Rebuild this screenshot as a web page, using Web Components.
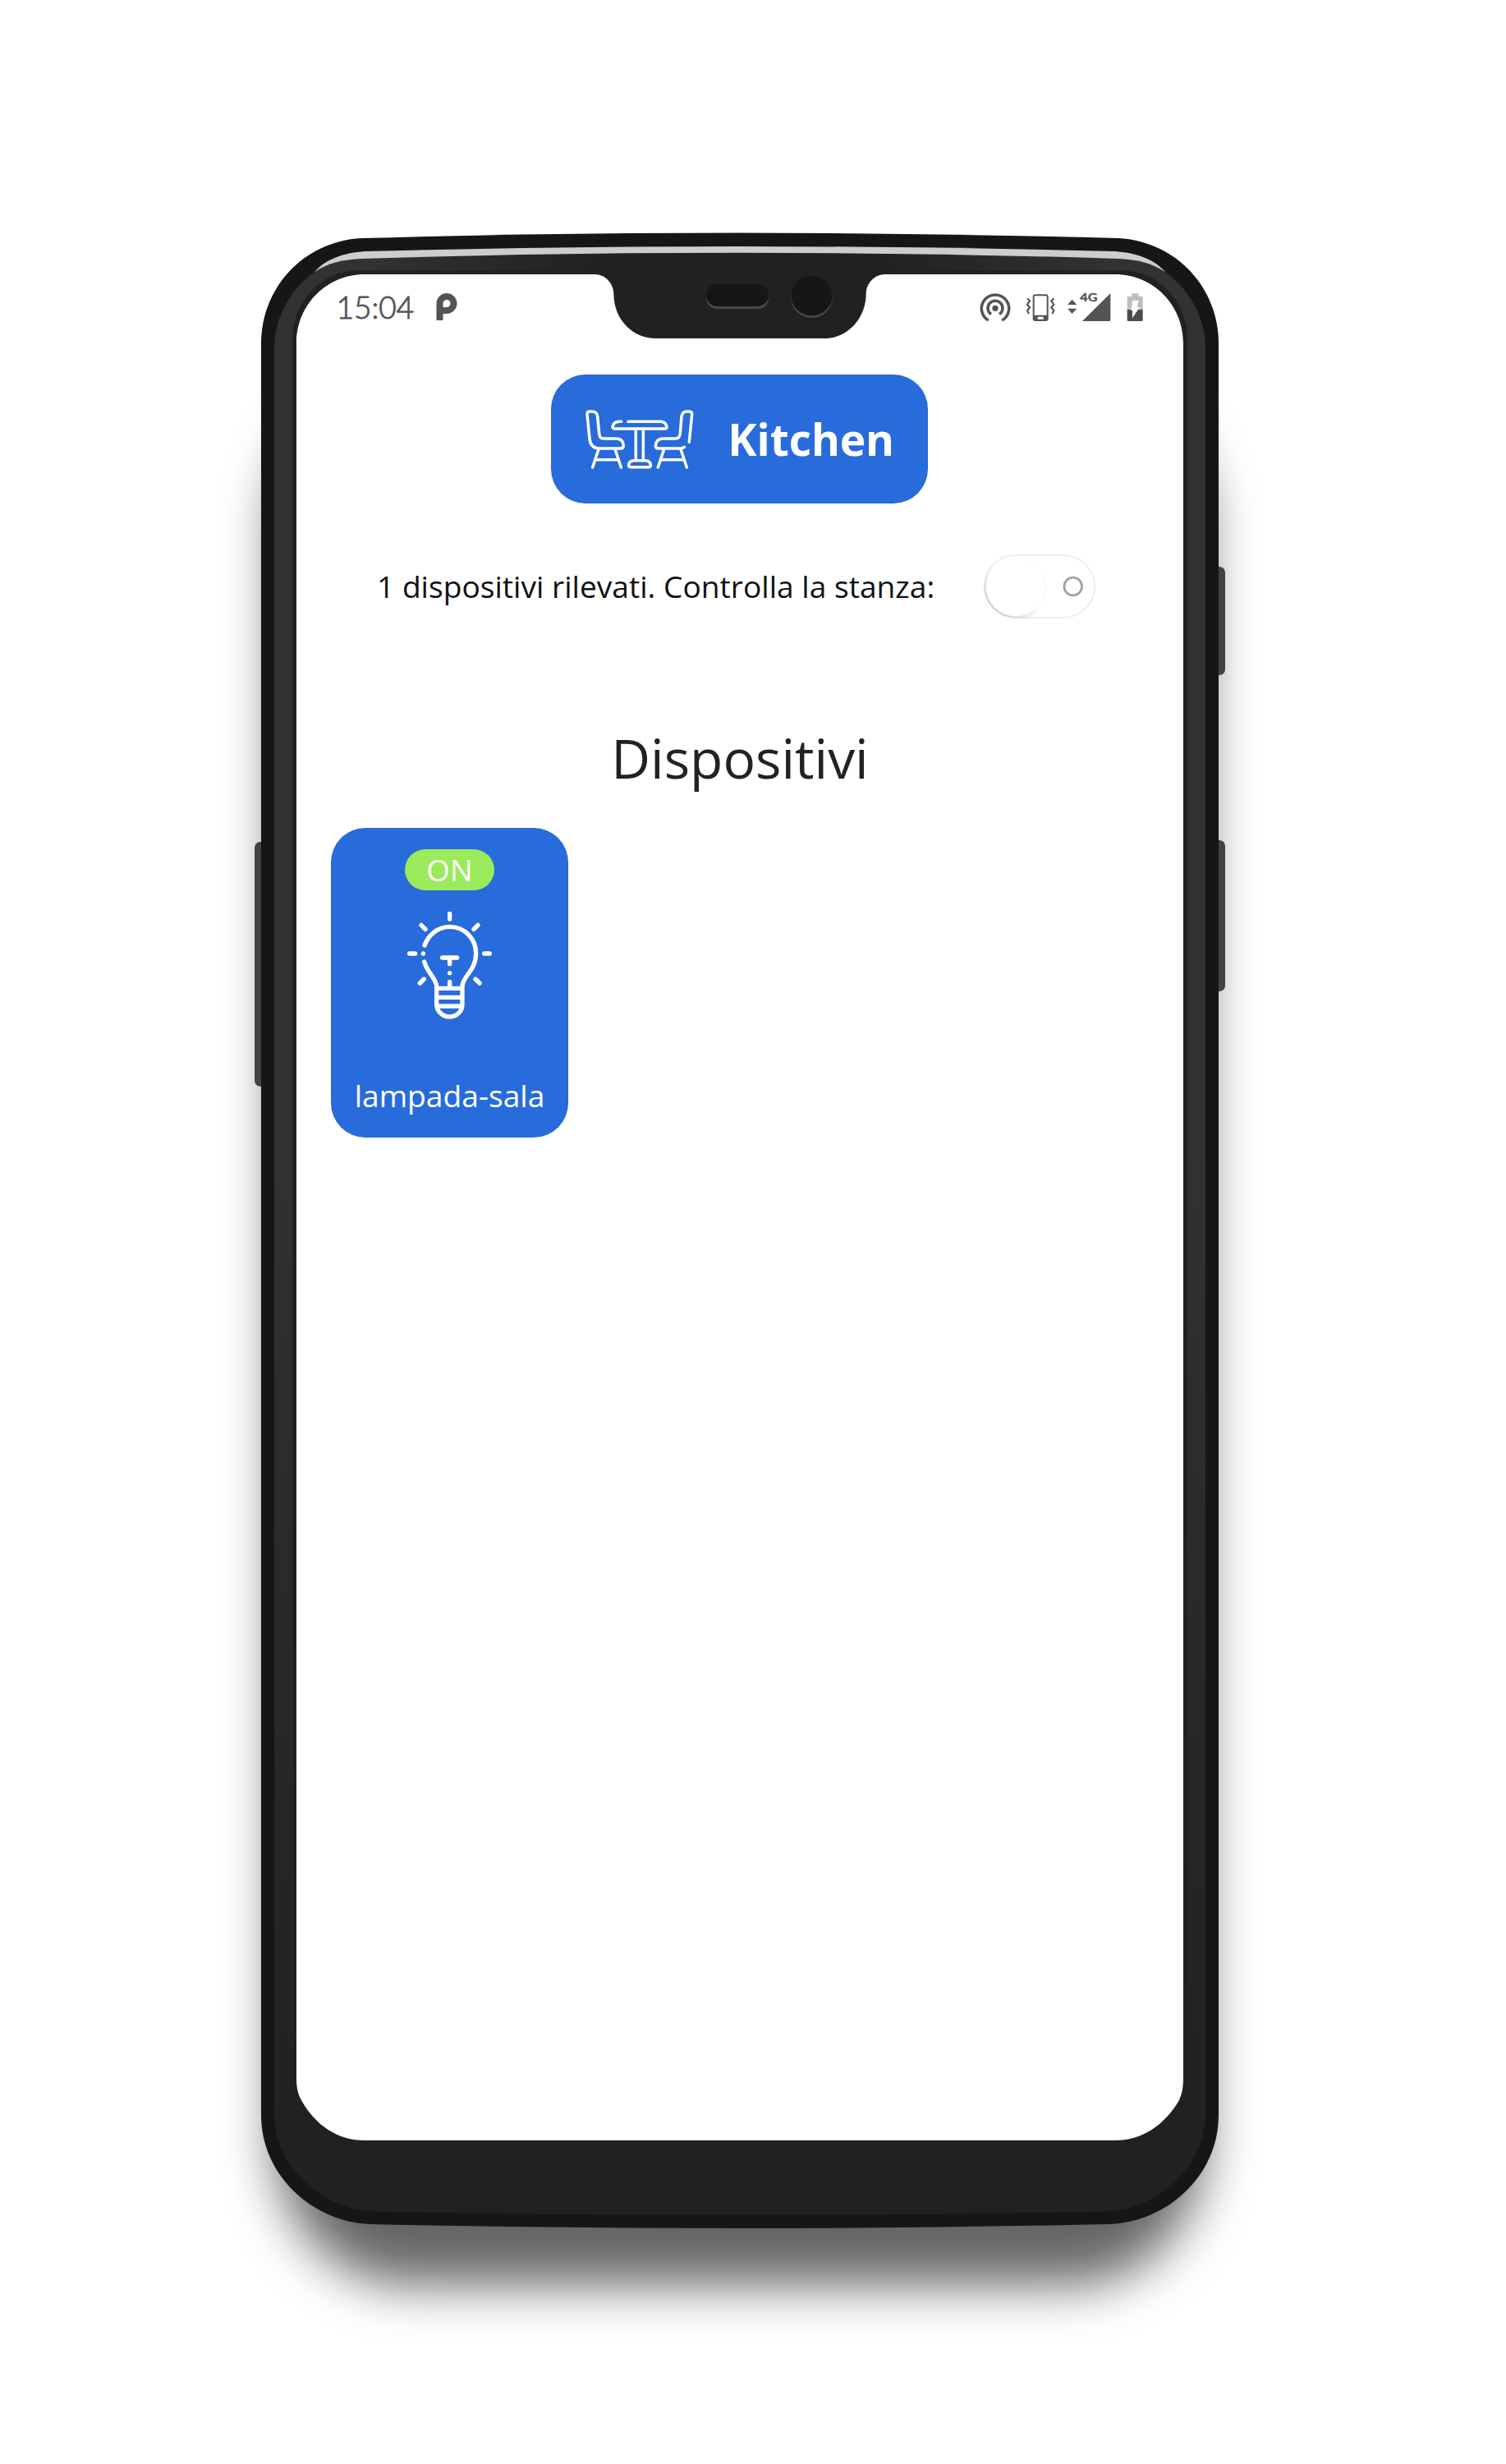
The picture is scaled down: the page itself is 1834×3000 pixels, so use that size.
<!DOCTYPE html>
<html lang="it">
<head>
<meta charset="utf-8">
<title>Kitchen</title>
<style>
html,body{margin:0;background:#fff}
body{font-family:"Open Sans","Noto Sans",sans-serif}
</style>
</head>
<body>
<phone-mockup>
  <app-screen>
    <status-bar slot="status">15:04</status-bar>
    <room-badge>Kitchen</room-badge>
    <room-control>1 dispositivi rilevati. Controlla la stanza:</room-control>
    <section-title>Dispositivi</section-title>
    <device-card><span slot="state">ON</span>lampada-sala</device-card>
  </app-screen>
</phone-mockup>
<script>
const define = (name, html) => {
  const t = document.createElement('template');
  t.innerHTML = html;
  customElements.define(name, class extends HTMLElement {
    constructor() {
      super();
      this.attachShadow({ mode: 'open' }).appendChild(t.content.cloneNode(true));
    }
  });
};

define('phone-mockup', `
<style>
:host{display:grid;width:1834px;height:3000px;overflow:hidden;background:#fff}
svg,.view{grid-area:1/1}
svg{display:block}
.view{margin:334px 393px 394px 361px}
</style>
<svg width="1834" height="3000" viewBox="0 0 1834 3000">
  <defs>
    <filter id="blur" filterUnits="userSpaceOnUse" x="200" y="280" width="1434" height="2700"><feGaussianBlur stdDeviation="31"/></filter>
    <linearGradient id="h" gradientUnits="userSpaceOnUse" x1="334" y1="0" x2="1468" y2="0">
      <stop offset="0" stop-color="#333132"/><stop offset=".1" stop-color="#333132"/><stop offset=".36" stop-color="#212121"/>
      <stop offset=".64" stop-color="#212121"/><stop offset=".9" stop-color="#333132"/><stop offset="1" stop-color="#333132"/>
    </linearGradient>
    <linearGradient id="v" gradientUnits="userSpaceOnUse" x1="0" y1="300" x2="0" y2="2697">
      <stop offset=".45" stop-color="#212121" stop-opacity="0"/><stop offset=".95" stop-color="#212121"/>
    </linearGradient>
  </defs>
  <rect x="334" y="460" width="1134" height="2322" rx="165" ry="180" fill="#000" fill-opacity=".6" filter="url(#blur)"/>
  <g fill="#424242">
    <rect x="310" y="1025" width="20" height="297.700" rx="7"/>
    <rect x="1472" y="690" width="20" height="132" rx="7"/>
    <rect x="1472" y="1023" width="20" height="184" rx="7"/>
  </g>
  <path fill="#161616" d="M318 418C318 352 368 294 440 290Q670 283.500 901 283.500T1362 290C1434 294 1484 352 1484 418V2575C1484 2650 1420 2705 1352 2708Q1126 2713 901 2713T450 2708C382 2705 318 2650 318 2575Z"/>
  <path fill="#cdcdcd" d="M383 331C398 314 420 308 444 306Q670 300 901 300T1358 306C1382 308 1404 314 1419 331Z"/>
  <path fill="url(#h)" d="M334 424C334 386 354 352 383 331C400 320 418 316 440 315Q670 307.700 901 307.700T1362 315C1384 316 1402 320 1419 331C1448 352 1468 386 1468 424V2571C1468 2640 1408 2688 1350 2692Q1126 2697 901 2697T452 2692C394 2688 334 2640 334 2571Z"/>
  <path fill="url(#v)" d="M334 424C334 386 354 352 383 331H1419C1448 352 1468 386 1468 424V2571C1468 2640 1408 2688 1350 2692Q1126 2697 901 2697T452 2692C394 2688 334 2640 334 2571Z"/>
  <path fill="#212121" d="M356 413C356 367 392 329.500 436 329.500H1366C1410 329.500 1446 367 1446 413V2535H356Z"/>
  <path fill="#fff" d="M361 418C361 371 398 334 444 334H724C738 334 747 346 747.300 357C747.300 390 771 412 799 412H1004C1032 412 1054.700 388 1054.700 357C1055 346 1064 334 1078 334H1358C1404 334 1441 371 1441 418V2530C1441 2543 1439 2550 1436 2557C1418 2588 1390 2606 1358 2606H444C412 2606 384 2588 367 2557C363 2550 361 2543 361 2530Z"/>
  <g fill="#4a4a4a"><rect x="860" y="349" width="76" height="27.200" rx="13.600"/><circle cx="988.500" cy="361.500" r="25.500"/></g>
  <g fill="#161616"><rect x="860" y="346" width="76" height="27" rx="13.500"/><ellipse cx="988.500" cy="360" rx="25.300" ry="24.300"/></g>
</svg>
<div class="view"><slot></slot></div>`);

define('app-screen', `
<style>
:host{display:flex;flex-direction:column;height:100%}
</style>
<slot name="status"></slot><slot></slot>`);

define('status-bar', `
<style>
:host{display:flex;align-items:center;height:80px;padding:0 47.670px 0 48.500px;color:#535554;font:300 37px/44px Lato,sans-serif}
.time{-webkit-text-stroke:.9px #535554}
.p{margin-left:27px}
.icons{margin-left:auto}
</style>
<span class="time"><slot></slot></span>
<svg class="p" width="26" height="34" viewBox="0 0 26 34"><path d="M4.500 33V12.500a8.500 8.500 0 1 1 8.500 8.500H8.500" fill="none" stroke="#535554" stroke-width="8"/></svg>
<svg class="icons" width="200" height="38" viewBox="460 255 600 114">
  <g fill="none" stroke="#535554" stroke-width="10.500">
    <path d="M492 360A50 50 0 1 1 542 360"/>
    <path d="M502 338A27 27 0 1 1 532 338"/>
    <g stroke-width="6.500"><path d="M634 280l9 9-9 13 9 11-9 11 6 12M731 280l-9 9 9 13-9 11 9 11-6 12"/></g>
  </g>
  <circle cx="517" cy="316" r="11" fill="#535554"/>
  <path fill="#535554" fill-rule="evenodd" d="M663 265h39q9 0 9 9v81q0 8-9 8h-39q-9 0-9-8v-81q0-9 9-9zM660 271v70h45v-70zM672 347v9h21v-9z"/>
  <path fill="#535554" d="M798 284l17 19h-34zM798 336l17-19h-34zM938 261v98q0 4-4 4h-99z"/>
  <text x="827" y="292" font-family="Lato,sans-serif" font-weight="700" font-size="39" textLength="63" lengthAdjust="spacingAndGlyphs" fill="#535554" stroke="#535554" stroke-width="1">4G</text>
  <path fill="#bdbec2" d="M1015 262h26v11h12q3 0 3 3v46h-57v-46q0-3 3-3h13z"/>
  <path fill="#4c4e4d" d="M999 321h57v38q0 4-4 4h-49q-4 0-4-4z"/>
  <path fill="#fff" d="M1019 288h22l-6 24h10l-27 40v-28h-5z"/>
</svg>`);

define('room-badge', `
<style>
:host{display:flex;align-items:center;box-sizing:border-box;width:459px;height:157px;margin:42px 0 0 310.300px;padding-left:40.700px;gap:41px;border-radius:42px;background:#286bdb;color:#fff;font-weight:700;font-size:53.200px;letter-spacing:-.1px;line-height:74px}
svg{flex:none}
span{padding-top:1px}
</style>
<svg width="133.330" height="75" viewBox="155 170 400 225" fill="none" stroke="#fff" stroke-width="10.500" stroke-linecap="round" stroke-linejoin="round">
  <path d="M164 192Q164 182 173 182H182Q200 182 202 200L208 262Q209 281 224 281H270Q297 282 297 308Q296 317 287 317H206Q176 315 173 281Z"/>
  <path d="M206 320L184 386M266 320L288 386M196 358H277M445 320L423 386M506 320L528 386M435 358H516"/>
  <path d="M289 219H279Q260 221 257 238Q257 244 265 245H447Q456 245 455 238Q452 221 433 219H314"/>
  <path d="M342 249V357M369 249V357M334 361H378Q396 363 396 379Q396 385 388 385H324Q316 385 316 379Q316 363 334 361Z"/>
  <path d="M537 293L547 192Q547 182 537 182H529Q512 182 509 200L504 262Q502 281 487 281H441Q415 282 414 308Q414 317 424 317H506Q514 316 519 312"/>
</svg>
<span><slot></slot></span>`);

define('toggle-switch', `
<style>
:host{display:block;width:136px;height:78px}
svg{display:block}
</style>
<svg width="136" height="78" viewBox="0 0 136 78">
  <defs>
    <filter id="s" x="-30%" y="-30%" width="160%" height="160%"><feGaussianBlur stdDeviation="3"/></filter>
    <linearGradient id="g" x1="0" y1="1" x2=".9" y2="0"><stop offset="0" stop-color="#b9b9b9"/><stop offset=".45" stop-color="#e6e6e6"/><stop offset=".6" stop-color="#fff" stop-opacity="0"/></linearGradient>
    <clipPath id="c"><rect width="136" height="78" rx="39"/></clipPath>
  </defs>
  <rect x="1" y="1" width="134" height="76" rx="38" fill="#fff" stroke="#ededed" stroke-width="2"/>
  <g clip-path="url(#c)">
    <circle cx="37.500" cy="40.500" r="38" fill="url(#g)" filter="url(#s)"/>
  </g>
  <circle cx="39" cy="39" r="36.300" fill="#fff"/>
  <path d="M52 5A36.300 36.300 0 0 1 52 73" fill="none" stroke="#f6f6f6"/>
  <circle cx="108.700" cy="39" r="10.800" fill="none" stroke="#a3a3a3" stroke-width="2.800"/>
</svg>`);

define('room-control', `
<style>
:host{display:flex;align-items:center;justify-content:space-between;height:78px;margin-top:62px;padding:0 107px 0 98px;color:#111;font-size:37.150px;line-height:50px;white-space:nowrap}
</style>
<span><slot></slot></span><toggle-switch></toggle-switch>`);

define('section-title', `
<style>
:host{display:block;margin-top:125px;height:90px;line-height:90px;font-size:65.900px;color:#222;text-align:center}
</style>
<slot></slot>`);

define('device-card', `
<style>
:host{display:flex;flex-direction:column;align-items:center;box-sizing:border-box;width:289px;height:377px;margin:40px 0 0 42px;padding-top:26px;border-radius:42px;background:#286bdb;color:#fff;font-size:37.200px;line-height:50px}
.state{width:109px;height:50px;border-radius:25px;background:#9bea5c;text-align:center;font-size:36.800px}
svg{margin:24.300px 0 66.700px}
</style>
<div class="state"><slot name="state"></slot></div>
<svg width="105.330" height="134" viewBox="315 355 316 402" fill="none" stroke="#fff" stroke-width="16" stroke-linecap="round" stroke-linejoin="round">
  <path d="M473 368V388M369 410L384 425M576 410L561 425M326 514H347M599 514H619M379 607L364 622M567 607L582 622"/>
  <path d="M381 484C396 443 432 416 473 416C529 416 569 461 569 514C569 577 519 597 519 634V699C519 724 499 745 473 745C447 745 425 724 425 699V634C425 606 392 586 380 544"/>
  <path d="M446 529H500M473 531V552M473 617V636M430 641H516M430 674H516M428 706H517"/>
  <circle cx="376" cy="514" r="8" fill="#fff" stroke="none"/><circle cx="473" cy="585" r="8" fill="#fff" stroke="none"/>
</svg>
<span><slot></slot></span>`);
</script>
</body>
</html>
